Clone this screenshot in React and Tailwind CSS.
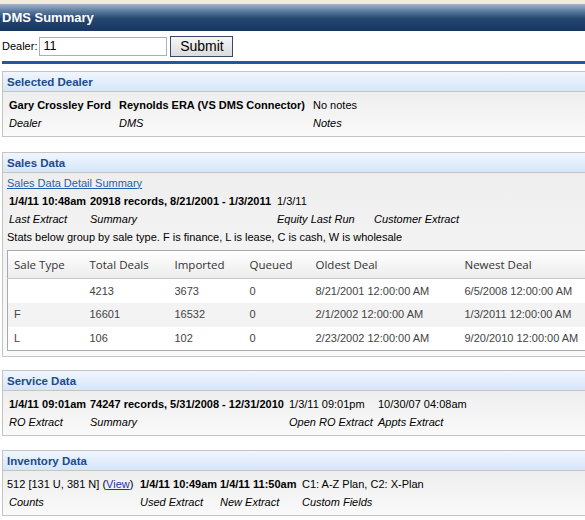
import React from "react";

function Panel({ title, children, bodyClass = "" }) {
  return (
    <div className="ml-[2px] w-[640px] border border-[#c4c4c4]">
      <div className="h-[20px] border-b border-[#c4c4c4] bg-gradient-to-b from-[#f0f6fe] to-[#d6e6f8] pl-[4px] text-[11.5px] font-bold leading-[20px] text-[#1b4b8c]">
        {title}
      </div>
      <div className={"whitespace-nowrap bg-gradient-to-b from-[#eeeeee] to-[#fafafa] " + bodyClass}>{children}</div>
    </div>
  );
}

const salesRows = [
  { type: "", total: "4213", imported: "3673", queued: "0", oldest: "8/21/2001 12:00:00 AM", newest: "6/5/2008 12:00:00 AM" },
  { type: "F", total: "16601", imported: "16532", queued: "0", oldest: "2/1/2002 12:00:00 AM", newest: "1/3/2011 12:00:00 AM" },
  { type: "L", total: "106", imported: "102", queued: "0", oldest: "2/23/2002 12:00:00 AM", newest: "9/20/2010 12:00:00 AM" },
];

export default function App() {
  return (
    <div className="h-[520px] w-[585px] overflow-hidden bg-white font-['Liberation_Sans',Arial,sans-serif] text-[11px] text-black">
      <div className="h-[4px] bg-[#efebd8]" />
      <div className="h-[27px] bg-[linear-gradient(to_bottom,#a3b6c9_0%,#58779b_28%,#234670_55%,#173760_100%)] pl-[2px] text-[13px] font-bold leading-[27px] text-white">
        DMS Summary
      </div>

      <div className="mt-[5px] flex h-[20px] items-center pl-[2px] text-[11px]">
        <span>Dealer:</span>
        <div className="ml-[2px] h-[19px] w-[128px] border border-[#a8b0bc] bg-white pl-[3px] text-[12.5px] leading-[17px]">
          11
        </div>
        <button className="ml-[3px] h-[21px] w-[63px] border border-[#3a4a66] bg-gradient-to-b from-[#f7f7f7] to-[#dcdcdc] text-[14px] leading-[19px]">
          Submit
        </button>
      </div>

      <div className="ml-[2px] mt-[5px] h-[3px] bg-[#1e5aa3]" />

      <div className="mt-[7px]">
        <Panel title="Selected Dealer" bodyClass="pl-[6px] py-[4px]">
          <div className="grid h-[18px] grid-cols-[110px_194px_1fr] items-center">
            <span className="font-bold">Gary Crossley Ford</span>
            <span className="font-bold">Reynolds ERA (VS DMS Connector)</span>
            <span>No notes</span>
          </div>
          <div className="grid h-[18px] grid-cols-[110px_194px_1fr] items-center italic">
            <span>Dealer</span>
            <span>DMS</span>
            <span>Notes</span>
          </div>
        </Panel>
      </div>

      <div className="mt-[15px]">
        <Panel title="Sales Data" bodyClass="pl-[4px] pt-[1px] pb-[5px]">
          <div className="flex h-[18px] items-center">
            <a href="#" className="text-[#1f5fb0] underline">
              Sales Data Detail Summary
            </a>
          </div>
          <div className="ml-[2px] grid h-[18px] grid-cols-[81px_187px_97px_1fr] items-center">
            <span className="font-bold">1/4/11 10:48am</span>
            <span className="font-bold">20918 records, 8/21/2001 - 1/3/2011</span>
            <span>1/3/11</span>
            <span></span>
          </div>
          <div className="ml-[2px] grid h-[18px] grid-cols-[81px_187px_97px_1fr] items-center italic">
            <span>Last Extract</span>
            <span>Summary</span>
            <span>Equity Last Run</span>
            <span>Customer Extract</span>
          </div>
          <div className="flex h-[18px] items-center">
            Stats below group by sale type. F is finance, L is lease, C is cash, W is wholesale
          </div>
          <table className="mt-[4px] w-[630px] table-fixed border-collapse border border-[#a9a9a9] bg-white">
            <colgroup>
              <col className="w-[76px]" />
              <col className="w-[85px]" />
              <col className="w-[75px]" />
              <col className="w-[66px]" />
              <col className="w-[149px]" />
              <col className="w-[179px]" />
            </colgroup>
            <thead>
              <tr className="h-[28px] border-b border-[#c8c8c8] bg-gradient-to-b from-[#ffffff] to-[#ececec] text-left font-['Open_Sans',sans-serif] text-[11.5px] text-[#333]">
                <th className="pl-[6px] font-normal">Sale Type</th>
                <th className="pl-[6px] font-normal">Total Deals</th>
                <th className="pl-[6px] font-normal">Imported</th>
                <th className="pl-[6px] font-normal">Queued</th>
                <th className="pl-[6px] font-normal">Oldest Deal</th>
                <th className="pl-[6px] font-normal">Newest Deal</th>
              </tr>
            </thead>
            <tbody className="text-[#444]">
              {salesRows.map((r, i) => (
                <tr key={i} className={"h-[24px] " + (i === 1 ? "bg-[#f3f3f3]" : "bg-white")}>
                  <td className="pl-[6px]">{r.type}</td>
                  <td className="pl-[6px]">{r.total}</td>
                  <td className="pl-[6px]">{r.imported}</td>
                  <td className="pl-[6px]">{r.queued}</td>
                  <td className="pl-[6px]">{r.oldest}</td>
                  <td className="pl-[6px]">{r.newest}</td>
                </tr>
              ))}
            </tbody>
          </table>
        </Panel>
      </div>

      <div className="mt-[13px]">
        <Panel title="Service Data" bodyClass="pl-[6px] py-[4px]">
          <div className="grid h-[18px] grid-cols-[81px_199px_89px_1fr] items-center">
            <span className="font-bold">1/4/11 09:01am</span>
            <span className="font-bold">74247 records, 5/31/2008 - 12/31/2010</span>
            <span>1/3/11 09:01pm</span>
            <span>10/30/07 04:08am</span>
          </div>
          <div className="grid h-[18px] grid-cols-[81px_199px_89px_1fr] items-center italic">
            <span>RO Extract</span>
            <span>Summary</span>
            <span>Open RO Extract</span>
            <span>Appts Extract</span>
          </div>
        </Panel>
      </div>

      <div className="mt-[14px]">
        <Panel title="Inventory Data" bodyClass="pl-[4px] py-[4px]">
          <div className="grid h-[18px] grid-cols-[133px_80px_82px_1fr] items-center">
            <span>
              512 [131 U, 381 N] (
              <a href="#" className="text-[#2233aa] underline">
                View
              </a>
              )
            </span>
            <span className="font-bold">1/4/11 10:49am</span>
            <span className="font-bold">1/4/11 11:50am</span>
            <span>C1: A-Z Plan, C2: X-Plan</span>
          </div>
          <div className="grid h-[18px] grid-cols-[133px_80px_82px_1fr] items-center italic">
            <span className="pl-[2px]">Counts</span>
            <span>Used Extract</span>
            <span>New Extract</span>
            <span>Custom Fields</span>
          </div>
        </Panel>
      </div>
    </div>
  );
}
